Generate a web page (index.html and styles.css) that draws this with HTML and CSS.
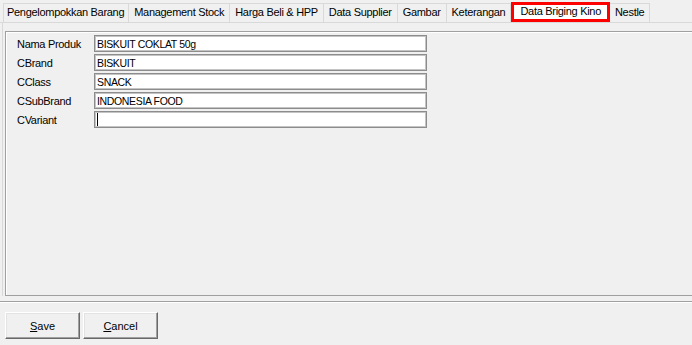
FILE: index.html
```html
<!DOCTYPE html>
<html lang="id">
<head>
    <meta charset="UTF-8">
    <meta name="viewport" content="width=device-width, initial-scale=1.0">
    <title>Data Barang</title>
    <link rel="stylesheet" href="styles.css">
</head>
<body>
    <div class="tabs">
        <div class="tab first">Pengelompokkan Barang</div>
        <div class="tab">Management Stock</div>
        <div class="tab">Harga Beli &amp; HPP</div>
        <div class="tab">Data Supplier</div>
        <div class="tab">Gambar</div>
        <div class="tab">Keterangan</div>
        <div class="tab active">Data Briging Kino</div>
        <div class="tab">Nestle</div>
    </div>

    <div class="tab-page">
        <div class="group">
            <div class="form-row">
                <label>Nama Produk</label>
                <div class="field">BISKUIT COKLAT 50g</div>
            </div>
            <div class="form-row">
                <label>CBrand</label>
                <div class="field">BISKUIT</div>
            </div>
            <div class="form-row">
                <label>CClass</label>
                <div class="field">SNACK</div>
            </div>
            <div class="form-row">
                <label>CSubBrand</label>
                <div class="field">INDONESIA FOOD</div>
            </div>
            <div class="form-row">
                <label>CVariant</label>
                <div class="field"><span class="caret"></span></div>
            </div>
        </div>
    </div>

    <div class="divider"></div>

    <div class="footer">
        <button class="btn"><u>S</u>ave</button>
        <button class="btn"><u>C</u>ancel</button>
    </div>
</body>
</html>
```

FILE: styles.css
```css
body {
    margin: 0;
    width: 692px;
    height: 345px;
    overflow: hidden;
    background: #f0f0f0;
    font-family: "Liberation Sans", Arial, sans-serif;
    font-size: 11px;
    color: #000;
}
.tabs {
    display: flex;
    align-items: flex-end;
    height: 22px;
    padding-left: 3px;
    border-bottom: 1px solid #d9d9d9;
}
.tab {
    box-sizing: border-box;
    height: 19px;
    line-height: 17px;
    padding: 0 5px;
    border-top: 1px solid #d9d9d9;
    border-right: 1px solid #d9d9d9;
    letter-spacing: -0.3px;
    white-space: nowrap;
}
.tab.first {
    border-left: 1px solid #d9d9d9;
    padding: 0 4px 0 3px;
}
.tab.active {
    height: 20px;
    line-height: 13px;
    padding: 0 6px;
    background: #fff;
    border: 3px solid #f00;
}
.tab-page {
    padding: 8px 0 0 2px;
    margin-left: 2px;
    border-left: 1px solid #d9d9d9;
}
.group {
    box-sizing: border-box;
    height: 265px;
    padding: 3px 0 0 11px;
    border-top: 1px solid #a0a0a0;
    border-left: 1px solid #a0a0a0;
    border-bottom: 1px solid #a0a0a0;
    box-shadow: inset 1px 1px 0 #fff;
}
.form-row {
    display: flex;
    align-items: center;
    height: 17px;
    margin-bottom: 2px;
}
.form-row label {
    width: 77px;
    letter-spacing: -0.3px;
}
.field {
    box-sizing: border-box;
    display: flex;
    align-items: center;
    width: 333px;
    height: 17px;
    padding-left: 2px;
    background: #fff;
    border: 1px solid #8c8c8c;
    box-shadow: inset 0 0 0 1px #c4c4c4;
    font-size: 10.5px;
    letter-spacing: -0.35px;
}
.caret {
    display: inline-block;
    width: 1px;
    height: 13px;
    background: #000;
}
.divider {
    margin-top: 5px;
    border-top: 1px solid #a0a0a0;
    border-bottom: 1px solid #fff;
}
.footer {
    display: flex;
    gap: 3px;
    padding: 9px 5px;
}
.btn {
    box-sizing: border-box;
    width: 75px;
    height: 27px;
    padding: 0;
    background: #f0f0f0;
    border: 1px solid;
    border-color: #fff #696969 #696969 #fff;
    box-shadow: inset -1px -1px 0 #a0a0a0, inset 1px 1px 0 #e3e3e3;
    font-family: "Liberation Sans", Arial, sans-serif;
    font-size: 11px;
    color: #000;
}
```
